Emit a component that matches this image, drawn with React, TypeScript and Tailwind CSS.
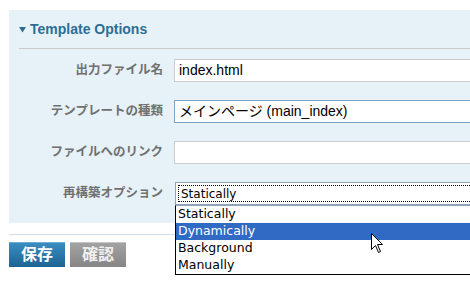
import React from "react";

const jp = { fontFamily: '"Liberation Sans", "Noto Sans CJK JP", sans-serif' };
const tahoma = { fontFamily: '"DejaVu Sans", "Noto Sans CJK JP", sans-serif' };

function Label({ children }: { children: React.ReactNode }) {
    return (
        <div className="w-[154px] text-right text-[12.5px] font-bold text-[#707070] leading-none" style={jp}>
            {children}
        </div>
    );
}

const options = ["Statically", "Dynamically", "Background", "Manually"];

export default function App() {
    return (
        <div className="w-[470px] h-[285px] overflow-hidden bg-white pl-[9px] pt-[10px] relative">
            <div className="w-[540px]">
                {/* Options panel */}
                <div className="bg-[#e7f2f8] pb-[18px]">
                    <div className="h-[38px] flex items-center pl-[10px] gap-[4px]">
                        <svg width="7" height="6" viewBox="0 0 7 6" className="mt-[1px]">
                            <polygon points="0,0 7,0 3.5,5.5" fill="#2b6e94" />
                        </svg>
                        <span className="text-[14px] font-bold text-[#2b6e94]" style={jp}>
                            Template Options
                        </span>
                    </div>
                    <div className="ml-[10px] border-t border-[#c9c9c9]" />

                    <div className="flex flex-col mt-[10px]">
                        <div className="flex items-center gap-[11px]">
                            <Label>出力ファイル名</Label>
                            <div className="w-[330px] h-[23px] bg-white border border-[#cccccc] flex items-center pl-[4px] text-[14px] text-black" style={jp}>
                                index.html
                            </div>
                        </div>
                        <div className="flex items-center gap-[11px] mt-[18px]">
                            <Label>テンプレートの種類</Label>
                            <div className="w-[330px] h-[23px] bg-white border border-[#7da2c6] flex items-center pl-[4px] text-[14px] text-black" style={jp}>
                                メインページ (main_index)
                            </div>
                        </div>
                        <div className="flex items-center gap-[11px] mt-[18px]">
                            <Label>ファイルへのリンク</Label>
                            <div className="w-[330px] h-[23px] bg-white border border-[#cccccc]" />
                        </div>
                        <div className="flex items-center gap-[12px] mt-[18px]">
                            <Label>再構築オプション</Label>
                            <div className="relative">
                                <div className="w-[330px] h-[23px] bg-white border border-[#8fa4b8] p-[2px]">
                                    <div className="h-full border border-dotted border-black flex items-center pl-[2px] text-[12px] text-black" style={tahoma}>
                                        Statically
                                    </div>
                                </div>
                                {/* open dropdown list */}
                                <div className="absolute left-0 top-full w-[330px] bg-white border border-black border-t-[#8fa4b8] z-10" style={tahoma}>
                                    {options.map((o) => (
                                        <div
                                            key={o}
                                            className={
                                                o === "Dynamically"
                                                    ? "h-[17px] flex items-center pl-[2px] text-[12.5px] bg-[#316ac5] text-white"
                                                    : "h-[17px] flex items-center pl-[2px] text-[12.5px] text-black"
                                            }
                                        >
                                            {o}
                                        </div>
                                    ))}
                                </div>
                            </div>
                        </div>
                    </div>
                </div>

                <div className="mt-[11px] border-t border-[#cfdee6]" />

                {/* Buttons */}
                <div className="flex gap-[5px] mt-[7px]">
                    <div className="w-[56px] h-[25px] flex items-center justify-center text-[16px] font-bold text-white bg-gradient-to-b from-[#3a8dc1] to-[#1c6392] border-t border-[#6aaed6]" style={jp}>
                        保存
                    </div>
                    <div className="w-[56px] h-[25px] flex items-center justify-center text-[16px] font-bold text-[#f0f0f0] bg-gradient-to-b from-[#a3a3a3] to-[#858585] border-t border-[#c4c4c4]" style={jp}>
                        確認
                    </div>
                </div>
            </div>

            {/* mouse pointer */}
            <svg className="absolute left-[371px] top-[233px] z-20" width="13" height="21" viewBox="0 0 13 21">
                <polygon
                    points="0.5,0.5 0.5,16.5 4.5,12.5 7.5,19.5 9.5,18.5 6.5,11.5 11.5,11.5"
                    fill="white"
                    stroke="black"
                    strokeWidth="1"
                />
            </svg>
        </div>
    );
}
